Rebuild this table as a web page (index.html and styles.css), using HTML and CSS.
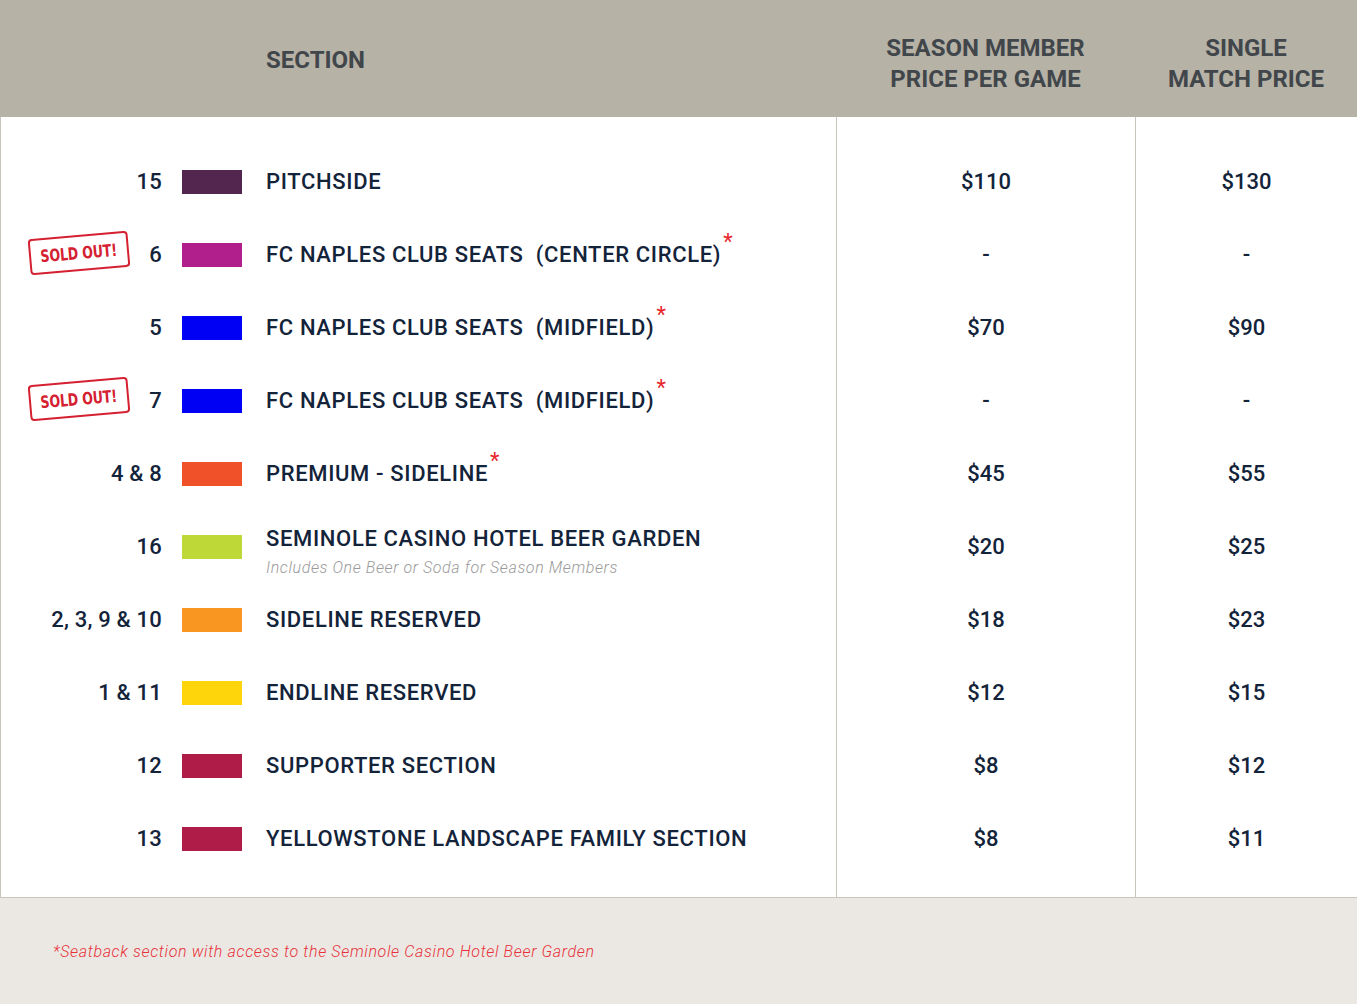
FILE: index.html
```html
<!DOCTYPE html>
<html lang="en">
<head>
<meta charset="utf-8">
<title>Pricing</title>
<link rel="stylesheet" href="styles.css">
</head>
<body>
<div class="pricing">
  <div class="head">
    <div class="h-section">SECTION</div>
    <div class="h-price">SEASON MEMBER<br>PRICE PER GAME</div>
    <div class="h-price">SINGLE<br>MATCH PRICE</div>
  </div>
  <div class="body">
    <div class="col col-section">
      <div class="row"><div class="num">15</div><span class="sw" style="background:#532650"></span><div class="name">PITCHSIDE</div></div>
      <div class="row"><div class="num"><span class="stamp"><span class="stamp-t">SOLD OUT!</span></span>6</div><span class="sw" style="background:#b11f8c"></span><div class="name">FC NAPLES CLUB SEATS&nbsp; (CENTER CIRCLE)<sup class="ast">*</sup></div></div>
      <div class="row"><div class="num">5</div><span class="sw" style="background:#0000f5"></span><div class="name">FC NAPLES CLUB SEATS&nbsp; (MIDFIELD)<sup class="ast">*</sup></div></div>
      <div class="row"><div class="num"><span class="stamp"><span class="stamp-t">SOLD OUT!</span></span>7</div><span class="sw" style="background:#0000f5"></span><div class="name">FC NAPLES CLUB SEATS&nbsp; (MIDFIELD)<sup class="ast">*</sup></div></div>
      <div class="row"><div class="num">4 &amp; 8</div><span class="sw" style="background:#f15129"></span><div class="name">PREMIUM - SIDELINE<sup class="ast">*</sup></div></div>
      <div class="row"><div class="num">16</div><span class="sw" style="background:#bed837"></span><div class="name">SEMINOLE CASINO HOTEL BEER GARDEN<div class="sub">Includes One Beer or Soda for Season Members</div></div></div>
      <div class="row"><div class="num">2, 3, 9 &amp; 10</div><span class="sw" style="background:#f99622"></span><div class="name">SIDELINE RESERVED</div></div>
      <div class="row"><div class="num">1 &amp; 11</div><span class="sw" style="background:#fdd50a"></span><div class="name">ENDLINE RESERVED</div></div>
      <div class="row"><div class="num">12</div><span class="sw" style="background:#b01c48"></span><div class="name">SUPPORTER SECTION</div></div>
      <div class="row"><div class="num">13</div><span class="sw" style="background:#b01c48"></span><div class="name">YELLOWSTONE LANDSCAPE FAMILY SECTION</div></div>
    </div>
    <div class="col col-price">
      <div class="cell">$110</div>
      <div class="cell">-</div>
      <div class="cell">$70</div>
      <div class="cell">-</div>
      <div class="cell">$45</div>
      <div class="cell">$20</div>
      <div class="cell">$18</div>
      <div class="cell">$12</div>
      <div class="cell">$8</div>
      <div class="cell">$8</div>
    </div>
    <div class="col col-single">
      <div class="cell">$130</div>
      <div class="cell">-</div>
      <div class="cell">$90</div>
      <div class="cell">-</div>
      <div class="cell">$55</div>
      <div class="cell">$25</div>
      <div class="cell">$23</div>
      <div class="cell">$15</div>
      <div class="cell">$12</div>
      <div class="cell">$11</div>
    </div>
  </div>
  <div class="foot">*Seatback section with access to the Seminole Casino Hotel Beer Garden</div>
</div>
</body>
</html>
```
FILE: styles.css
```css
* { box-sizing: border-box; }
html, body { margin: 0; padding: 0; }
body {
  font-family: Roboto, "Liberation Sans", sans-serif;
  color: #13233a;
  background: #ebe8e3;
}
.pricing { width: 1357px; }
.head {
  display: flex;
  height: 117px;
  background: #b6b2a6;
  color: #41464b;
  font-weight: 700;
  font-size: 24px;
  line-height: 31px;
  align-items: center;
}
.h-section { width: 836px; padding-left: 266px; padding-top: 4px; }
.h-price { width: 299px; text-align: center; padding-top: 10px; }
.h-price:last-child { width: 222px; }
.body {
  display: flex;
  background: #fff;
  border-bottom: 1px solid #c9c5bb;
  border-left: 1px solid #c9c5bb;
}
.col { padding: 26px 0 24px; }
.col-section { width: 835px; }
.col-price { width: 299px; border-left: 1px solid #c9c5bb; }
.col-single { flex: 1; border-left: 1px solid #c9c5bb; }
.row {
  height: 73px;
  padding-top: 4px;
  display: flex;
  align-items: center;
}
.num {
  width: 161px;
  display: flex;
  align-items: center;
  justify-content: flex-end;
  font-size: 22px;
  font-weight: 500;
  letter-spacing: 0.2px;
}
.sw { width: 60px; height: 24px; margin-left: 20px; flex: none; }
.name {
  margin-left: 24px;
  font-size: 22px;
  font-weight: 500;
  line-height: 26px;
  letter-spacing: 0.65px;
}
.sub {
  font-size: 16px;
  line-height: 19px;
  font-style: italic;
  font-weight: 300;
  color: #9a9a9a;
  letter-spacing: 0.6px;
  margin-top: 6px;
  margin-bottom: -9px;
}
.ast {
  color: #e8262d;
  font-size: 22px;
  font-weight: 400;
  position: relative;
  top: -4px;
  margin-left: 2px;
  line-height: 0;
}
.stamp {
  margin-right: auto;
  margin-left: 28px;
  width: 100px;
  height: 36px;
  border: 2px solid #d42030;
  border-radius: 4px;
  color: #d42030;
  display: flex;
  align-items: center;
  justify-content: center;
  transform: rotate(-5deg);
  position: relative;
  top: -2px;
}
.stamp-t {
  font-family: "DejaVu Sans", sans-serif;
  font-weight: 700;
  font-size: 17px;
  letter-spacing: -0.2px;
  display: inline-block;
  transform: scaleX(0.74);
  white-space: nowrap;
}
.cell {
  height: 73px;
  padding-top: 4px;
  display: flex;
  align-items: center;
  justify-content: center;
  font-size: 22px;
  font-weight: 500;
}
.foot {
  height: 105px;
  display: flex;
  align-items: center;
  padding-left: 53px;
  padding-top: 2px;
  color: #e8313a;
  font-style: italic;
  font-size: 16px;
  font-weight: 300;
  letter-spacing: 0.65px;
}
```
